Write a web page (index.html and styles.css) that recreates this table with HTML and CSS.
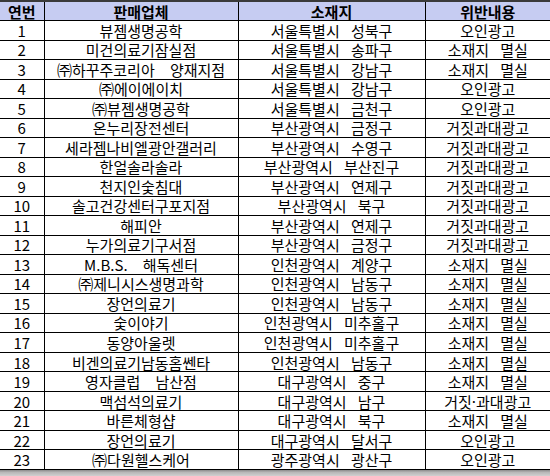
FILE: index.html
```html
<!DOCTYPE html>
<html lang="ko">
<head>
<meta charset="utf-8">
<link rel="stylesheet" href="styles.css">
</head>
<body>
<div class="sheet">
<table class="grid">
<colgroup><col class="c1"><col class="c2"><col class="c3"><col class="c4"></colgroup>
<thead>
<tr><th>연번</th><th>판매업체</th><th>소재지</th><th>위반내용</th></tr>
</thead>
<tbody>
<tr><td>1</td><td>뷰젬생명공학</td><td>서울특별시 성북구</td><td>오인광고</td></tr>
<tr><td>2</td><td>미건의료기잠실점</td><td>서울특별시 송파구</td><td>소재지 멸실</td></tr>
<tr><td>3</td><td class="wide">㈜하꾸주코리아 양재지점</td><td>서울특별시 강남구</td><td>소재지 멸실</td></tr>
<tr><td>4</td><td>㈜에이에이치</td><td>서울특별시 강남구</td><td>오인광고</td></tr>
<tr><td>5</td><td>㈜뷰젬생명공학</td><td>서울특별시 금천구</td><td>오인광고</td></tr>
<tr><td>6</td><td>온누리장전센터</td><td>부산광역시 금정구</td><td>거짓과대광고</td></tr>
<tr><td>7</td><td>세라젬나비엘광안갤러리</td><td>부산광역시 수영구</td><td>거짓과대광고</td></tr>
<tr><td>8</td><td>한얼솔라솔라</td><td>부산광역시 부산진구</td><td>거짓과대광고</td></tr>
<tr><td>9</td><td>천지인숯침대</td><td>부산광역시 연제구</td><td>거짓과대광고</td></tr>
<tr><td>10</td><td>솔고건강센터구포지점</td><td>부산광역시 북구</td><td>거짓과대광고</td></tr>
<tr><td>11</td><td>해피안</td><td>부산광역시 연제구</td><td>거짓과대광고</td></tr>
<tr><td>12</td><td>누가의료기구서점</td><td>부산광역시 금정구</td><td>거짓과대광고</td></tr>
<tr><td>13</td><td class="wide">M.B.S. 해독센터</td><td>인천광역시 계양구</td><td>소재지 멸실</td></tr>
<tr><td>14</td><td>㈜제니시스생명과학</td><td>인천광역시 남동구</td><td>소재지 멸실</td></tr>
<tr><td>15</td><td>장언의료기</td><td>인천광역시 남동구</td><td>소재지 멸실</td></tr>
<tr><td>16</td><td>숯이야기</td><td>인천광역시 미추홀구</td><td>소재지 멸실</td></tr>
<tr><td>17</td><td>동양아울렛</td><td>인천광역시 미추홀구</td><td>소재지 멸실</td></tr>
<tr><td>18</td><td>비겐의료기남동홈쎈타</td><td>인천광역시 남동구</td><td>소재지 멸실</td></tr>
<tr><td>19</td><td class="wide">영자클럽 남산점</td><td>대구광역시 중구</td><td>소재지 멸실</td></tr>
<tr><td>20</td><td>맥섬석의료기</td><td>대구광역시 남구</td><td>거짓·과대광고</td></tr>
<tr><td>21</td><td>바른체형샵</td><td>대구광역시 북구</td><td>소재지 멸실</td></tr>
<tr><td>22</td><td>장언의료기</td><td>대구광역시 달서구</td><td>오인광고</td></tr>
<tr><td>23</td><td>㈜다원헬스케어</td><td>광주광역시 광산구</td><td>오인광고</td></tr>
</tbody>
</table>
<div class="foot"></div>
</div>
</body>
</html>
```

FILE: styles.css
```css
html, body {
  margin: 0;
  padding: 0;
  background: #ffffff;
}
.sheet {
  width: 550px;
  height: 476px;
  overflow: hidden;
  display: flex;
  flex-direction: column;
}
.grid {
  width: 550px;
  border-collapse: collapse;
  table-layout: fixed;
  border-top: 2px solid #3a3a3a;
  font-family: "Noto Sans CJK KR", "Noto Sans", sans-serif;
  font-size: 15px;
  color: #000;
}
.c1 { width: 44px; }
.c2 { width: 194px; }
.c3 { width: 187px; }
.c4 { width: 125px; }
.grid th, .grid td {
  padding: 0;
  text-align: center;
  white-space: nowrap;
  line-height: 17px;
  word-spacing: 7px;
  border-left: 1px solid #000;
  border-bottom: 1px solid #000;
}
.grid th:first-child, .grid td:first-child { border-left: none; }
.grid th {
  height: 18px;
  background: #c6ccf2;
  font-weight: 700;
  font-size: 15px;
}
.grid td {
  height: 18.52px;
}
.grid td.wide {
  word-spacing: 11px;
}
.foot {
  flex: 1;
  background: linear-gradient(#8a8a8a, #b8b8b8 40%, #d0d0d0);
}
```
